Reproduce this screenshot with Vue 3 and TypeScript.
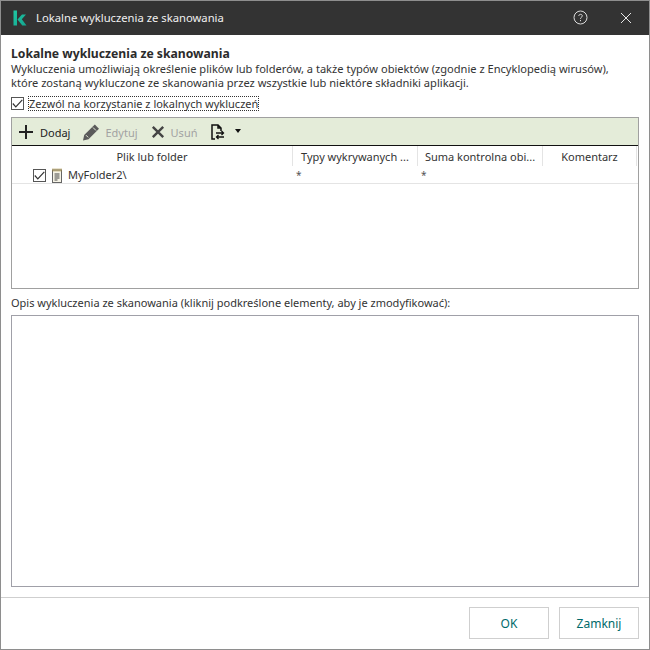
<script setup lang="ts">
interface Col { label: string; width: number }
const cols: Col[] = [
  { label: 'Plik lub folder', width: 281 },
  { label: 'Typy wykrywanych ...', width: 125 },
  { label: 'Suma kontrolna obi...', width: 125 },
  { label: 'Komentarz', width: 94 },
]
</script>

<template>
  <div class="window">
    <header class="titlebar">
      <svg class="logo" width="14" height="16" viewBox="0 0 14 16">
        <defs>
          <linearGradient id="kg" x1="0" y1="0" x2="1" y2="1">
            <stop offset="0" stop-color="#1fc7a3" />
            <stop offset="1" stop-color="#14a58f" />
          </linearGradient>
        </defs>
        <path d="M0.500 .5h3.500v15H.5zM4.500 9.500 9 4.500h4L8.800 9.300 13.500 15.500H9.300z" fill="url(#kg)" />
      </svg>
      <span class="title">Lokalne wykluczenia ze skanowania</span>
      <svg class="help" width="15" height="15" viewBox="0 0 15 15">
        <circle cx="7.500" cy="7.500" r="6.500" fill="none" stroke="#ddd" stroke-width="1" />
        <path d="M5.800 6c0-2.200 3.500-2.200 3.500-.1 0 1.400-1.800 1.300-1.800 2.900" fill="none" stroke="#ddd" stroke-width="1" />
        <rect x="7" y="10" width="1" height="1.200" fill="#ddd" />
      </svg>
      <svg class="close" width="12" height="12" viewBox="0 0 12 12">
        <path d="M1 1l10 10M11 1 1 11" stroke="#e6e6e6" stroke-width="1" fill="none" />
      </svg>
    </header>

    <main class="body">
      <h1 class="heading">Lokalne wykluczenia ze skanowania</h1>
      <p class="desc">Wykluczenia umożliwiają określenie plików lub folderów, a także typów obiektów (zgodnie z Encyklopedią wirusów),<br />które zostaną wykluczone ze skanowania przez wszystkie lub niektóre składniki aplikacji.</p>
      <label class="allow">
        <span class="check">
          <svg width="11" height="9" viewBox="0 0 11 9"><path d="M.8 4.500 3.800 7.800 10.300.8" fill="none" stroke="#333" stroke-width="1.200" /></svg>
        </span>
        <span class="allow-text">Zezwól na korzystanie z lokalnych wykluczeń</span>
      </label>

      <section class="grid-box">
        <div class="toolbar">
          <span class="tool add">
            <svg width="16" height="16" viewBox="0 0 16 16"><path d="M7 1h2v6h6v2H9v6H7V9H1V7h6z" fill="#222" /></svg>
            <span>Dodaj</span>
          </span>
          <span class="tool off edit">
            <svg width="18" height="17" viewBox="0 0 18 17">
              <path d="M12.800.6 17 4.800 6.500 15.200 1 16.500l1.200-5.500z" fill="#5a5a5a" />
              <path d="M4 11.200l2.200 2.200M11 3.500l3 3" stroke="#e4ecd9" stroke-width="1" fill="none" />
            </svg>
            <span>Edytuj</span>
          </span>
          <span class="tool off del">
            <svg width="14" height="14" viewBox="0 0 14 14"><path d="M1.800 1.800l10.400 10.400M12.200 1.800 1.800 12.200" stroke="#444" stroke-width="2.400" fill="none" /></svg>
            <span>Usuń</span>
          </span>
          <span class="tool export">
            <svg width="14" height="16" viewBox="0 0 14 16">
              <path d="M4 15H1V1h6l3 3v3M7 1v3h3" fill="none" stroke="#111" stroke-width="1.500" />
              <path d="M5 9h7.500M10.500 7l2 2-2 2M13 13H5.500M7.500 11l-2 2 2 2" fill="none" stroke="#111" stroke-width="1.300" />
            </svg>
            <i class="caret"></i>
          </span>
        </div>
        <div class="head">
          <div v-for="c in cols" :key="c.label" class="hcell" :style="{ width: c.width + 'px' }">{{ c.label }}</div>
        </div>
        <div class="row">
          <div class="cell first" :style="{ width: cols[0].width + 'px' }">
            <span class="check">
              <svg width="11" height="9" viewBox="0 0 11 9"><path d="M.8 4.500 3.800 7.800 10.300.8" fill="none" stroke="#333" stroke-width="1.200" /></svg>
            </span>
            <svg class="note" width="12" height="15" viewBox="0 0 12 15">
              <rect x="1.500" y="2" width="9" height="12.500" fill="#f6f3e6" stroke="#666" />
              <path d="M2 .5v3M4 .5v3M6 .5v3M8 .5v3M10 .5v3" stroke="#a68e45" />
              <path d="M3.500 6h5M3.500 8h5M3.500 10h5M3.500 12h3" stroke="#444" />
            </svg>
            <span>MyFolder2\</span>
          </div>
          <div class="cell star" :style="{ width: cols[1].width + 'px' }">*</div>
          <div class="cell star" :style="{ width: cols[2].width + 'px' }">*</div>
        </div>
      </section>

      <p class="label">Opis wykluczenia ze skanowania (kliknij podkreślone elementy, aby je zmodyfikować):</p>
      <div class="details"></div>
    </main>

    <footer class="footer">
      <button class="btn" type="button">OK</button>
      <button class="btn" type="button">Zamknij</button>
    </footer>
  </div>
</template>

<style>
html, body { margin: 0; background: #fff; }
</style>

<style scoped>
.window {
  box-sizing: border-box;
  width: 650px;
  height: 650px;
  border: 1px solid #8e8e8e;
  display: flex;
  flex-direction: column;
  background: #fff;
  font-family: "Noto Sans", "Open Sans", sans-serif;
  font-size: 11px;
  color: #333;
}
.titlebar {
  height: 34px;
  box-sizing: border-box;
  flex: none;
  background: #333;
  display: flex;
  align-items: center;
  padding: 0 17px 1px 12px;
  color: #f0f0f0;
}
.logo { margin-right: 9px; }
.title { font-size: 11.250px; flex: 1; }
.help { margin-right: 32px; }
.body {
  flex: 1;
  display: flex;
  flex-direction: column;
  padding: 11px 10px 10px;
  min-height: 0;
}
.heading {
  margin: 0;
  font-size: 12.200px;
  line-height: 16px;
  font-weight: 700;
  color: #2b2b2b;
}
.desc {
  margin: 0;
  line-height: 14px;
  font-size: 11.100px;
}
.allow {
  display: flex;
  align-items: center;
  margin-top: 6px;
  height: 14px;
}
.check {
  box-sizing: border-box;
  width: 13px;
  height: 13px;
  border: 1px solid #555;
  display: inline-flex;
  align-items: center;
  justify-content: center;
  background: #fff;
  flex: none;
}
.allow-text {
  margin-left: 5px;
  outline: 1px dotted #333;
  line-height: 13px;
}
.grid-box {
  margin-top: 7px;
  height: 170px;
  flex: none;
  border: 1px solid #a0a0a0;
  display: flex;
  flex-direction: column;
}
.toolbar {
  height: 26px;
  padding-top: 1px;
  flex: none;
  background: #e4ecd9;
  border-bottom: 1px solid #111;
  display: flex;
  align-items: center;
  padding-left: 6px;
}
.tool {
  display: inline-flex;
  align-items: center;
  color: #222;
}
.tool.off { color: #a2a2a2; }
.add { gap: 6px; margin-right: 12px; }
.edit { gap: 5px; margin-right: 13px; }
.del { gap: 6px; margin-right: 14px; }
.export { gap: 10px; }
.caret {
  width: 0;
  height: 0;
  border-left: 3.500px solid transparent;
  border-right: 3.500px solid transparent;
  border-top: 4px solid #111;
  margin-top: -3px;
}
.head {
  display: flex;
  height: 20px;
  flex: none;
}
.hcell {
  box-sizing: border-box;
  flex: none;
  text-align: center;
  line-height: 21px;
  border-right: 1px solid #e4e4e4;
  white-space: nowrap;
  overflow: hidden;
}
.row {
  display: flex;
  height: 16px;
  padding-top: 1px;
  flex: none;
  border-bottom: 1px solid #e4e4e4;
  line-height: 16px;
}
.cell { box-sizing: border-box; flex: none; }
.first {
  display: flex;
  align-items: center;
  padding-left: 21px;
}
.note { margin: 0 5px 0 5px; }
.star { padding-left: 3px; font-size: 10px; color: #555; }
.label {
  margin: 0;
  margin-top: 6px;
  line-height: 16px;
}
.details {
  margin-top: 4px;
  height: 272px;
  flex: none;
  box-sizing: border-box;
  border: 1px solid #a0a0a8;
}
.footer {
  height: 52px;
  flex: none;
  border-top: 1px solid #cfcfcf;
  display: flex;
  justify-content: flex-end;
  gap: 10px;
  padding: 9px 10px 0;
  box-sizing: border-box;
}
.btn {
  width: 80px;
  height: 32px;
  box-sizing: border-box;
  background: #fff;
  border: 1px solid #cfcfcf;
  color: #006a6a;
  font: inherit;
  font-size: 12px;
  padding: 0;
}
</style>
